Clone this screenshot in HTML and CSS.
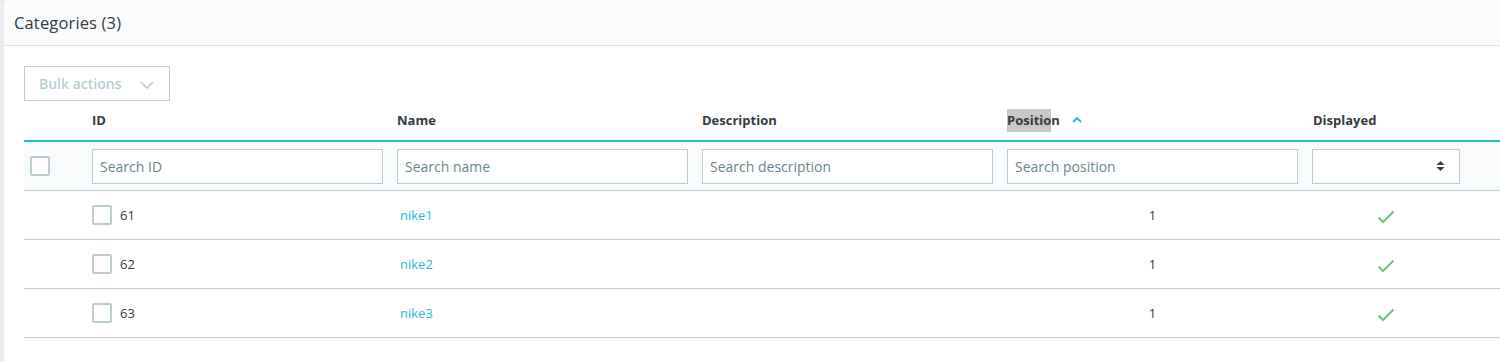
FILE: index.html
```html
<!DOCTYPE html>
<html lang="en">
<head>
    <meta charset="UTF-8">
    <meta name="viewport" content="width=device-width, initial-scale=1.0">
    <title>Categories</title>
    <link rel="stylesheet" href="styles.css">
</head>
<body>

    <div class="card">
        <div class="card-header">
            <h3>Categories (3)</h3>
        </div>

        <div class="card-body">
            <button class="bulk-btn" type="button" disabled>
                Bulk actions
                <svg class="chevron" width="14" height="8" viewBox="0 0 14 8"><path d="M1 1l6 6 6-6" fill="none" stroke="currentColor" stroke-width="1.6"/></svg>
            </button>

            <table class="grid-table">
                <colgroup>
                    <col class="col-bulk">
                    <col class="col-wide">
                    <col class="col-wide">
                    <col class="col-wide">
                    <col class="col-wide">
                    <col class="col-displayed">
                    <col>
                </colgroup>
                <thead>
                    <tr class="column-headers">
                        <th></th>
                        <th>ID</th>
                        <th>Name</th>
                        <th>Description</th>
                        <th><span class="selected">Positio</span>n
                            <svg class="sort" width="10" height="6" viewBox="0 0 10 6"><path d="M1 5l4-4 4 4" fill="none" stroke="currentColor" stroke-width="1.8"/></svg>
                        </th>
                        <th>Displayed</th>
                        <th></th>
                    </tr>
                    <tr class="column-filters">
                        <td><span class="checkbox big"></span></td>
                        <td><input type="text" placeholder="Search ID"></td>
                        <td><input type="text" placeholder="Search name"></td>
                        <td><input type="text" placeholder="Search description"></td>
                        <td><input type="text" placeholder="Search position"></td>
                        <td>
                            <div class="select">
                                <svg width="9" height="12" viewBox="0 0 9 12"><path d="M0.5 5L4.5 1l4 4z M0.5 7l4 4 4-4z" fill="#363a41"/></svg>
                            </div>
                        </td>
                        <td></td>
                    </tr>
                </thead>
                <tbody>
                    <tr>
                        <td></td>
                        <td><span class="checkbox"></span><span class="id">61</span></td>
                        <td><a href="#">nike1</a></td>
                        <td></td>
                        <td class="center">1</td>
                        <td class="center"><svg width="18" height="14" viewBox="0 0 18 14"><path d="M1.5 7.5l4.5 4.5 10.5-10.5" fill="none" stroke="#72c279" stroke-width="2"/></svg></td>
                        <td></td>
                    </tr>
                    <tr>
                        <td></td>
                        <td><span class="checkbox"></span><span class="id">62</span></td>
                        <td><a href="#">nike2</a></td>
                        <td></td>
                        <td class="center">1</td>
                        <td class="center"><svg width="18" height="14" viewBox="0 0 18 14"><path d="M1.5 7.5l4.5 4.5 10.5-10.5" fill="none" stroke="#72c279" stroke-width="2"/></svg></td>
                        <td></td>
                    </tr>
                    <tr>
                        <td></td>
                        <td><span class="checkbox"></span><span class="id">63</span></td>
                        <td><a href="#">nike3</a></td>
                        <td></td>
                        <td class="center">1</td>
                        <td class="center"><svg width="18" height="14" viewBox="0 0 18 14"><path d="M1.5 7.5l4.5 4.5 10.5-10.5" fill="none" stroke="#72c279" stroke-width="2"/></svg></td>
                        <td></td>
                    </tr>
                </tbody>
            </table>
        </div>
    </div>

</body>
</html>
```

FILE: styles.css
```css
body {
    margin: 0;
    background-color: #eaebec;
    font-family: "Open Sans", Arial, sans-serif;
    color: #363a41;
    overflow: hidden;
}

.card {
    margin-left: 4px;
    width: 1540px;
    height: 362px;
    background-color: white;
    border-top-left-radius: 5px;
}

.card-header {
    height: 45px;
    background-color: #fafbfc;
    border-bottom: 1px solid #dbe6e9;
    border-top-left-radius: 5px;
    display: flex;
    align-items: center;
    padding-left: 10px;
}

.card-header h3 {
    margin: 0;
    font-size: 16.5px;
    font-weight: 400;
    line-height: 20px;
    letter-spacing: 0.15px;
}

.card-body {
    padding: 20px 0 0 20px;
}

.bulk-btn {
    display: flex;
    align-items: center;
    width: 146px;
    height: 35px;
    padding: 0 0 0 14px;
    background-color: white;
    border: 1px solid #bbcdd2;
    color: #b7ced3;
    font-family: inherit;
    font-size: 14px;
    font-weight: 600;
}

.bulk-btn .chevron {
    margin-left: 19px;
    margin-top: 2px;
}

.grid-table {
    border-collapse: collapse;
    table-layout: fixed;
    width: 1516px;
    font-size: 13px;
}

.col-bulk {
    width: 61px;
}

.col-wide {
    width: 305px;
}

.col-displayed {
    width: 162px;
}

.grid-table th,
.grid-table td {
    padding: 0 7px;
    text-align: left;
    vertical-align: middle;
}

.column-headers th {
    height: 37px;
    padding-bottom: 2px;
    font-weight: 700;
    font-size: 13px;
    border-bottom: 2px solid #25b9d7;
}

.column-headers th:nth-child(6) {
    padding-left: 8px;
}

.column-headers .selected {
    background-color: #c8c8c8;
    padding: 2px 0 3px;
}

.sort {
    color: #25b9d7;
    margin-left: 9px;
    vertical-align: 2px;
}

.column-filters td {
    height: 48px;
    background-color: #fafbfc;
    border-bottom: 1px solid #bbcdd2;
}

.column-filters td:first-child {
    padding-left: 6px;
}

.column-filters input {
    box-sizing: border-box;
    width: 100%;
    height: 35px;
    padding: 0 7px;
    border: 1px solid #bbcdd2;
    font-family: inherit;
    font-size: 14px;
    color: #363a41;
    display: block;
}

.column-filters input::placeholder {
    color: #6c868e;
}

.select {
    box-sizing: border-box;
    height: 35px;
    background-color: white;
    border: 1px solid #bbcdd2;
    display: flex;
    align-items: center;
    justify-content: flex-end;
    padding-right: 14px;
}

.checkbox {
    display: inline-block;
    box-sizing: border-box;
    width: 20px;
    height: 20px;
    border: 2px solid #bbcdd2;
    border-radius: 2px;
    vertical-align: middle;
    background-color: white;
}

.checkbox.big {
    display: block;
}

.id {
    margin-left: 8px;
    vertical-align: middle;
}

tbody td {
    height: 48px;
    border-bottom: 1px solid #bbcdd2;
}

tbody a {
    color: #25b9d7;
    text-decoration: none;
    margin-left: 3px;
}

.center {
    text-align: center !important;
}

.center svg {
    display: inline-block;
    vertical-align: middle;
}
```
